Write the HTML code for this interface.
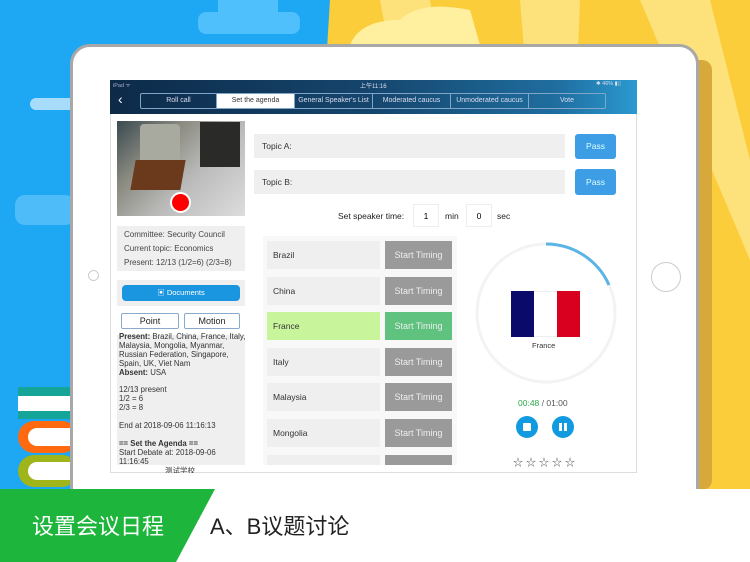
<!DOCTYPE html>
<html><head><meta charset="utf-8"><style>
*{margin:0;padding:0;box-sizing:border-box}
body{width:750px;height:562px;overflow:hidden;position:relative;font-family:"Liberation Sans","Noto Sans CJK SC",sans-serif;background:#1ea7f2}
.a{position:absolute}
.row{position:absolute;left:267px;width:113px;height:28px;background:#efefef;font-size:8.5px;color:#333;padding-left:6px;line-height:28px}
.st{position:absolute;left:385px;width:67px;height:28px;background:#9a9a9a;color:#eee;font-size:9px;text-align:center;line-height:28px}
.tab{position:absolute;top:94px;height:14px;font-size:7px;color:#dde;text-align:center;line-height:14px;border-right:1px solid #7fa6c8;white-space:nowrap}
</style></head><body>
<svg class="a" style="left:0;top:0" width="750" height="562">
<polygon points="330,0 750,0 750,490 300,490" fill="#fccd3a"/>
<path d="M380,0 L430,0 L520,490 L470,490 Z" fill="#fde17a"/>
<path d="M520,0 L580,0 L560,490 Z" fill="#fde17a"/>
<path d="M640,0 L710,0 L750,160 L750,260 Z" fill="#fde17a"/>
<path d="M350,45 Q360,20 400,20 Q420,0 470,10 L480,45 Z" fill="#fff0a0"/>
<rect x="198" y="12" width="102" height="22" rx="8" fill="#4fc0fb"/>
<rect x="218" y="0" width="60" height="18" fill="#4fc0fb"/>
<rect x="30" y="98" width="50" height="12" rx="6" fill="#a8dcfb"/>
<rect x="15" y="195" width="60" height="30" rx="10" fill="#4dbcf8"/>
<rect x="18" y="387" width="60" height="32" fill="#15a598"/>
<rect x="18" y="396" width="60" height="15" fill="#fff"/>
<rect x="18" y="421" width="60" height="32" rx="16" fill="#ff6a10"/>
<rect x="28" y="428" width="50" height="18" rx="9" fill="#fff"/>
<rect x="18" y="455" width="60" height="32" rx="16" fill="#9fb51a"/>
<rect x="28" y="462" width="50" height="18" rx="9" fill="#fff"/>
<rect x="690" y="60" width="22" height="430" rx="10" fill="#d6a93a"/>
</svg>
<div class="a" style="left:70px;top:44px;width:629px;height:480px;background:#fff;border:3px solid #a8a8a8;border-radius:20px"></div>
<div class="a" style="left:88px;top:270px;width:11px;height:11px;border:1px solid #ccc;border-radius:50%"></div>
<div class="a" style="left:651px;top:262px;width:30px;height:30px;border:1px solid #ccc;border-radius:50%"></div>
<div class="a" style="left:110px;top:80px;width:527px;height:393px;background:#fff;border:1px solid #ddd"></div>
<div class="a" style="left:110px;top:80px;width:527px;height:34px;background:linear-gradient(90deg,#0d2a48,#15466e 50%,#1f6ea0 85%,#2b9ad0)"></div>
<div class="a" style="left:113px;top:81px;font-size:5.5px;color:#aac">iPad ᯤ</div>
<div class="a" style="left:360px;top:81px;font-size:6px;color:#dde">上午11:16</div>
<div class="a" style="left:596px;top:81px;font-size:5.5px;color:#dde">✱ 46% ▮▯</div>
<div class="a" style="left:118px;top:91px;font-size:14px;color:#fff">‹</div>
<div class="a" style="left:140px;top:93px;width:466px;height:16px;border:1px solid #7fa6c8;border-radius:2px"></div>
<div class="tab" style="left:141px;width:76px">Roll call</div>
<div class="tab" style="left:217px;width:78px;background:#fff;color:#333">Set the agenda</div>
<div class="tab" style="left:295px;width:78px">General Speaker's List</div>
<div class="tab" style="left:373px;width:78px">Moderated caucus</div>
<div class="tab" style="left:451px;width:78px">Unmoderated caucus</div>
<div class="tab" style="left:529px;width:76px;border:none">Vote</div>
<div class="a" style="left:117px;top:121px;width:128px;height:95px;background:linear-gradient(135deg,#3a4a50,#8a8a80 30%,#bbb 60%,#ddd)"></div>
<div class="a" style="left:140px;top:124px;width:40px;height:60px;background:#a8aaa0;border-radius:4px 4px 10px 10px"></div>
<div class="a" style="left:133px;top:160px;width:50px;height:30px;background:#6b3a1c;transform:skew(-10deg)"></div>
<div class="a" style="left:200px;top:122px;width:40px;height:45px;background:#2a2a28"></div>
<div class="a" style="left:170px;top:192px;width:21px;height:21px;border-radius:50%;background:#f00;border:2px solid #fff"></div>
<div class="a" style="left:117px;top:226px;width:128px;height:45px;background:#efefef"></div>
<div class="a" style="left:124px;top:228px;line-height:14px;font-size:8px;color:#444;white-space:nowrap">Committee: Security Council<br>Current topic: Economics<br>Present: 12/13 (1/2=6)&nbsp;(2/3=8)</div>
<div class="a" style="left:117px;top:280px;width:128px;height:26px;background:#efefef"></div>
<div class="a" style="left:122px;top:285px;width:118px;height:16px;background:#1a96e0;border-radius:4px;color:#fff;font-size:7.5px;text-align:center;line-height:16px">▣ Documents</div>
<div class="a" style="left:121px;top:313px;width:58px;height:16px;border:1px solid #8ac;border-radius:2px;font-size:9px;text-align:center;line-height:14px;color:#222">Point</div>
<div class="a" style="left:184px;top:313px;width:56px;height:16px;border:1px solid #8ac;border-radius:2px;font-size:9px;text-align:center;line-height:14px;color:#222">Motion</div>
<div class="a" style="left:117px;top:335px;width:128px;height:130px;background:#efefef"></div>
<div class="a" style="left:119px;top:333px;width:126px;height:132px;overflow:hidden;font-size:7.8px;color:#333;line-height:8.9px;white-space:nowrap"><b>Present:</b> Brazil, China, France, Italy,<br>Malaysia, Mongolia, Myanmar,<br>Russian Federation, Singapore,<br>Spain, UK, Viet Nam<br><b>Absent:</b> USA<br><br>12/13 present<br>1/2 = 6<br>2/3 = 8<br><br>End at 2018-09-06 11:16:13<br><br><b>== Set the Agenda ==</b><br>Start Debate at: 2018-09-06<br>11:16:45</div>
<div class="a" style="left:165px;top:465px;font-size:7.5px;color:#333;height:8px;overflow:hidden">测试学校</div>
<div class="a" style="left:254px;top:134px;width:311px;height:24px;background:#efefef;font-size:8.5px;color:#333;padding-left:8px;line-height:24px">Topic A:</div>
<div class="a" style="left:575px;top:134px;width:41px;height:25px;background:#3d9ee6;border-radius:3px;color:#dff;font-size:8.5px;text-align:center;line-height:25px">Pass</div>
<div class="a" style="left:254px;top:170px;width:311px;height:24px;background:#efefef;font-size:8.5px;color:#333;padding-left:8px;line-height:24px">Topic B:</div>
<div class="a" style="left:575px;top:169px;width:41px;height:26px;background:#3d9ee6;border-radius:3px;color:#dff;font-size:8.5px;text-align:center;line-height:26px">Pass</div>
<div class="a" style="left:338px;top:211px;font-size:8.5px;color:#222">Set speaker time:</div>
<div class="a" style="left:413px;top:204px;width:26px;height:23px;border:1px solid #eee;font-size:8.5px;text-align:center;line-height:22px">1</div>
<div class="a" style="left:445px;top:211px;font-size:8.5px;color:#222">min</div>
<div class="a" style="left:466px;top:204px;width:26px;height:23px;border:1px solid #eee;font-size:8.5px;text-align:center;line-height:22px">0</div>
<div class="a" style="left:497px;top:211px;font-size:8.5px;color:#222">sec</div>
<div class="a" style="left:263px;top:236px;width:194px;height:229px;background:#f8f8f8"></div>
<div class="row" style="top:241px">Brazil</div><div class="st" style="top:241px">Start Timing</div>
<div class="row" style="top:277px">China</div><div class="st" style="top:277px">Start Timing</div>
<div class="row" style="top:312px;background:#c8f59c">France</div><div class="st" style="top:312px;background:#5fc27e">Start Timing</div>
<div class="row" style="top:348px">Italy</div><div class="st" style="top:348px">Start Timing</div>
<div class="row" style="top:383px">Malaysia</div><div class="st" style="top:383px">Start Timing</div>
<div class="row" style="top:419px">Mongolia</div><div class="st" style="top:419px">Start Timing</div>
<div class="row" style="top:455px;height:10px"></div><div class="st" style="top:455px;height:10px"></div>
<svg class="a" style="left:470px;top:235px" width="160" height="160">
<circle cx="76" cy="78" r="69" fill="none" stroke="#f3f3f3" stroke-width="3"/>
<path d="M76,9 A69,69 0 0 1 139,50" fill="none" stroke="#5ab4e6" stroke-width="3"/>
</svg>
<div class="a" style="left:511px;top:291px;width:23px;height:46px;background:#0a0a6a"></div>
<div class="a" style="left:534px;top:291px;width:23px;height:46px;background:#fff;border-top:1px solid #eee;border-bottom:1px solid #eee"></div>
<div class="a" style="left:557px;top:291px;width:23px;height:46px;background:#d8001e"></div>
<div class="a" style="left:532px;top:341px;font-size:7.5px;color:#333">France</div>
<div class="a" style="left:518px;top:398px;font-size:8.5px;color:#555"><span style="color:#2aa84a">00:48</span> / 01:00</div>
<div class="a" style="left:516px;top:416px;width:22px;height:22px;border-radius:50%;background:#129ae0"></div>
<div class="a" style="left:523px;top:423px;width:8px;height:8px;background:#fff;border-radius:1px"></div>
<div class="a" style="left:552px;top:416px;width:22px;height:22px;border-radius:50%;background:#129ae0"></div>
<div class="a" style="left:559px;top:423px;width:2.5px;height:8px;background:#fff"></div>
<div class="a" style="left:564px;top:423px;width:2.5px;height:8px;background:#fff"></div>
<div class="a" style="left:513px;top:454px;font-size:10px;color:#555;letter-spacing:3px">☆☆☆☆☆</div>
<div class="a" style="left:0;top:489px;width:750px;height:73px;background:#fff"></div>
<svg class="a" style="left:0;top:489px" width="230" height="73"><polygon points="0,0 215,0 176,73 0,73" fill="#1db53b"/></svg>
<div class="a" style="left:32px;top:509px;font-size:22px;color:#fff;font-family:'Noto Sans CJK SC',sans-serif">设置会议日程</div>
<div class="a" style="left:210px;top:509px;font-size:22px;color:#222;font-family:'Liberation Sans','Noto Sans CJK SC',sans-serif">A、B议题讨论</div>
</body></html>
